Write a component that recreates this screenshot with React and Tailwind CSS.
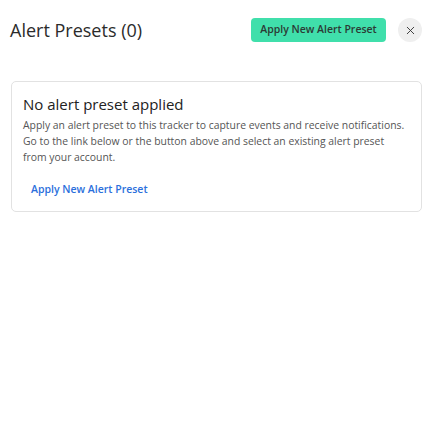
import { X } from 'lucide-react'

export default function App() {
  return (
    <div className="w-[433px] h-[431px] bg-white text-[#222] [font-family:'Open_Sans',sans-serif]">
      {/* Header */}
      <div className="flex items-center justify-between pl-[10px] pr-[11px] pt-[18px] pb-[39px]">
        <h1 className="text-[18px] leading-[24px] text-[#2b2b2b]">Alert Presets (0)</h1>
        <div className="flex items-center gap-3">
          <button className="h-6 w-[135px] rounded bg-[#40dfab] text-[10.5px] font-semibold text-[#2c3a35]">
            Apply New Alert Preset
          </button>
          <button className="w-6 h-6 rounded-full bg-[#efefef] flex items-center justify-center text-[#333]">
            <X size={13} strokeWidth={1.7} />
          </button>
        </div>
      </div>

      {/* Empty state card */}
      <div className="mx-[11px] border border-[#e2e2e2] rounded-[5px] pl-[11px] pr-3 pt-[11px] pb-[12px]">
        <h2 className="text-[15px] leading-[22px] text-[#222]">No alert preset applied</h2>
        <p className="mt-[2px] text-[10.4px] leading-4 text-[#555]">
          Apply an alert preset to this tracker to capture events and receive notifications. Go to the link below or the
          button above and select an existing alert preset from your account.
        </p>
        <button className="mt-[17px] px-2 text-[10.5px] font-semibold text-[#2b6fdc]">Apply New Alert Preset</button>
      </div>
    </div>
  )
}
